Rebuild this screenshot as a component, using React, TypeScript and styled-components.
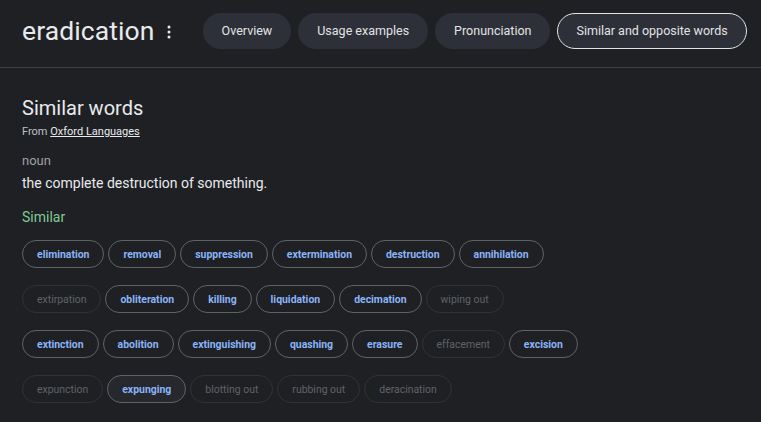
import React from 'react'
import styled, { createGlobalStyle } from 'styled-components'

const GlobalStyle = createGlobalStyle`
  html, body {
    margin: 0;
    padding: 0;
    background: #1f2023;
    font-family: Roboto, "Liberation Sans", Arial, sans-serif;
    color: #e8eaed;
  }
`

const Page = styled.div`
  width: 761px;
  height: 422px;
  overflow: hidden;
  background: #1f2023;
`

const Header = styled.div`
  display: flex;
  align-items: center;
  height: 68px;
  padding: 0 0 6px 22px;
  border-bottom: 1px solid #3c4043;
  box-sizing: border-box;
  white-space: nowrap;
`

const Title = styled.h1`
  margin: 0;
  font-size: 26.5px;
  font-weight: 400;
  color: #e8eaed;
  letter-spacing: 0.1px;
  flex-shrink: 0;
`

const MoreButton = styled.div`
  display: flex;
  align-items: center;
  justify-content: center;
  width: 20px;
  margin: 2px 24px 0 4px;
  color: #e8eaed;
  flex-shrink: 0;
`

const Tabs = styled.div`
  display: flex;
  gap: 7px;
  flex-shrink: 0;
`

const Tab = styled.div<{ $active?: boolean }>`
  height: 36px;
  display: flex;
  align-items: center;
  padding: 0 18px;
  border-radius: 18px;
  background: #2d3039;
  font-size: 12.5px;
  color: #e3e3e3;
  box-sizing: border-box;
  border: 1px solid ${p => (p.$active ? '#e3e3e3' : 'transparent')};
`

const Body = styled.div`
  padding: 27px 22px 0;
`

const SectionTitle = styled.h2`
  margin: 0;
  font-size: 20px;
  font-weight: 400;
  color: #e8eaed;
  line-height: 26px;
`

const Source = styled.div`
  font-size: 11px;
  color: #bdc1c6;
  margin-top: 4px;
  a {
    color: #e8eaed;
    text-decoration: underline;
  }
`

const PartOfSpeech = styled.div`
  margin-top: 15px;
  font-size: 13px;
  color: #9aa0a6;
`

const Definition = styled.div`
  margin-top: 7px;
  font-size: 14px;
  color: #e8eaed;
`

const Label = styled.div`
  margin-top: 18px;
  font-size: 14px;
  color: #81c995;
`

const ChipRows = styled.div`
  display: flex;
  flex-direction: column;
  gap: 17px;
  margin-top: 15px;
`

const ChipRow = styled.div`
  display: flex;
  gap: 4px;
`

const Chip = styled.div<{ $muted?: boolean; $hover?: boolean }>`
  height: 28px;
  display: flex;
  align-items: center;
  padding: 0 14px;
  border-radius: 14px;
  box-sizing: border-box;
  font-size: 10.45px;
  font-weight: ${p => (p.$muted ? 400 : 700)};
  color: ${p => (p.$muted ? '#5f6368' : '#8ab4f8')};
  border: 1px solid ${p => (p.$muted ? '#303236' : '#5f6368')};
  background: ${p => (p.$hover ? '#26282d' : 'transparent')};
`

type Word = { w: string; muted?: boolean; hover?: boolean }

const rows: Word[][] = [
  [{ w: 'elimination' }, { w: 'removal' }, { w: 'suppression' }, { w: 'extermination' }, { w: 'destruction' }, { w: 'annihilation' }],
  [{ w: 'extirpation', muted: true }, { w: 'obliteration' }, { w: 'killing' }, { w: 'liquidation' }, { w: 'decimation' }, { w: 'wiping out', muted: true }],
  [{ w: 'extinction' }, { w: 'abolition' }, { w: 'extinguishing' }, { w: 'quashing' }, { w: 'erasure' }, { w: 'effacement', muted: true }, { w: 'excision' }],
  [{ w: 'expunction', muted: true }, { w: 'expunging', hover: true }, { w: 'blotting out', muted: true }, { w: 'rubbing out', muted: true }, { w: 'deracination', muted: true }],
]

function DotsIcon() {
  return (
    <svg width="4" height="14" viewBox="0 0 4 14" fill="currentColor">
      <circle cx="2" cy="2" r="1.5" />
      <circle cx="2" cy="7" r="1.5" />
      <circle cx="2" cy="12" r="1.5" />
    </svg>
  )
}

export default function App() {
  return (
    <Page>
      <GlobalStyle />
      <Header>
        <Title>eradication</Title>
        <MoreButton><DotsIcon /></MoreButton>
        <Tabs>
          <Tab>Overview</Tab>
          <Tab>Usage examples</Tab>
          <Tab>Pronunciation</Tab>
          <Tab $active>Similar and opposite words</Tab>
        </Tabs>
      </Header>
      <Body>
        <SectionTitle>Similar words</SectionTitle>
        <Source>From <a>Oxford Languages</a></Source>
        <PartOfSpeech>noun</PartOfSpeech>
        <Definition>the complete destruction of something.</Definition>
        <Label>Similar</Label>
        <ChipRows>
          {rows.map((row, i) => (
            <ChipRow key={i}>
              {row.map(c => (
                <Chip key={c.w} $muted={c.muted} $hover={c.hover}>{c.w}</Chip>
              ))}
            </ChipRow>
          ))}
        </ChipRows>
      </Body>
    </Page>
  )
}
